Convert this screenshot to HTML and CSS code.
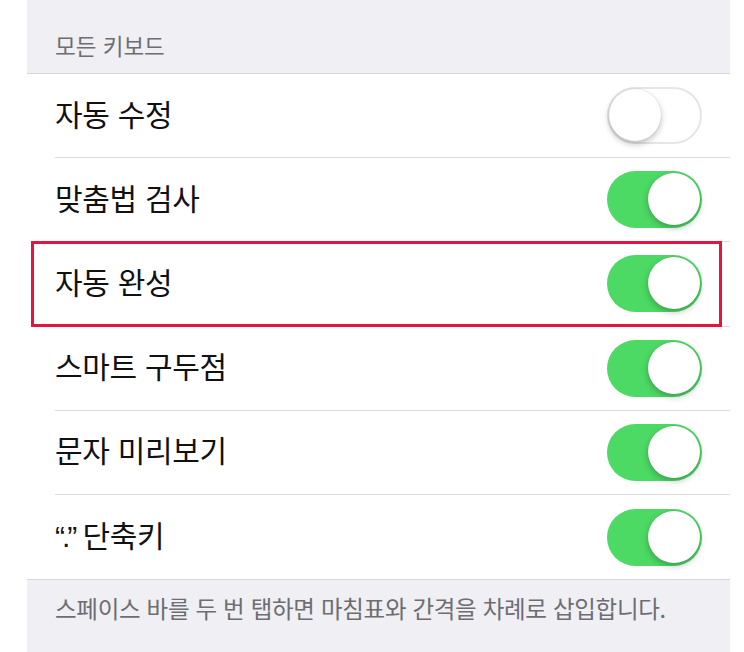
FILE: index.html
```html
<!DOCTYPE html>
<html lang="ko">
<head>
<meta charset="utf-8">
<link rel="stylesheet" href="styles.css">
</head>
<body>
<div class="panel">
  <div class="group-header">모든 키보드</div>
  <div class="list">
    <div class="row">
      <div class="row-inner">
        <span class="label">자동 수정</span>
        <span class="toggle off"><span class="knob"></span></span>
      </div>
    </div>
    <div class="row">
      <div class="row-inner">
        <span class="label">맞춤법 검사</span>
        <span class="toggle on"><span class="knob"></span></span>
      </div>
    </div>
    <div class="row">
      <div class="row-inner">
        <span class="label">자동 완성</span>
        <span class="toggle on"><span class="knob"></span></span>
      </div>
      <div class="highlight"></div>
    </div>
    <div class="row">
      <div class="row-inner">
        <span class="label">스마트 구두점</span>
        <span class="toggle on"><span class="knob"></span></span>
      </div>
    </div>
    <div class="row">
      <div class="row-inner">
        <span class="label">문자 미리보기</span>
        <span class="toggle on"><span class="knob"></span></span>
      </div>
    </div>
    <div class="row last">
      <div class="row-inner">
        <span class="label"><span class="quote">“.”</span> 단축키</span>
        <span class="toggle on"><span class="knob"></span></span>
      </div>
    </div>
  </div>
  <div class="group-footer">스페이스 바를 두 번 탭하면 마침표와 간격을 차례로 삽입합니다.</div>
</div>
</body>
</html>
```

FILE: styles.css
```css
html, body {
  margin: 0;
  padding: 0;
  background: #ffffff;
}
body {
  width: 744px;
  height: 652px;
  overflow: hidden;
  font-family: "Noto Sans CJK KR", "Noto Sans", sans-serif;
}
.panel {
  margin-left: 27px;
  width: 703px;
  height: 652px;
  background: #efeff4;
  display: flex;
  flex-direction: column;
}
.group-header {
  height: 74px;
  box-sizing: border-box;
  padding: 30px 0 0 28px;
  font-size: 22.5px;
  line-height: 30px;
  color: #6d6d72;
  border-bottom: 1px solid #d6d6da;
}
.list {
  background: #ffffff;
  border-bottom: 1px solid #d6d6da;
}
.row {
  position: relative;
  padding-left: 28px;
}
.row-inner {
  height: 83.2px;
  border-bottom: 1px solid #dcdce0;
  display: flex;
  align-items: center;
  justify-content: space-between;
  padding-right: 28px;
}
.row.last .row-inner {
  border-bottom: none;
  height: 84.2px;
}
.label {
  font-size: 30px;
  color: #111111;
  letter-spacing: -0.3px;
  padding-bottom: 6px;
}
.quote {
  font-family: "Liberation Sans", sans-serif;
  letter-spacing: -3px;
  margin-right: 0;
}
.toggle {
  position: relative;
  width: 95px;
  height: 57px;
  border-radius: 29px;
  box-sizing: border-box;
  flex-shrink: 0;
}
.toggle.off {
  background: #ffffff;
  border: 2px solid #e6e6ea;
}
.toggle.on {
  background: #4cd964;
}
.knob {
  position: absolute;
  top: 2px;
  width: 52px;
  height: 52px;
  border-radius: 50%;
  background: #ffffff;
  box-shadow: 0 3px 6px rgba(0, 0, 0, 0.25), 0 0 1px rgba(0, 0, 0, 0.2);
}
.toggle.off .knob {
  left: 0;
  top: 0;
}
.toggle.on .knob {
  right: 2px;
}
.highlight {
  position: absolute;
  left: 4px;
  top: -1px;
  width: 691px;
  height: 86px;
  box-sizing: border-box;
  border: 3px solid #e8123f;
  pointer-events: none;
}
.group-footer {
  padding: 13px 0 0 28px;
  font-size: 23.5px;
  line-height: 30px;
  color: #6d6d72;
  letter-spacing: -0.3px;
  white-space: nowrap;
}
```
